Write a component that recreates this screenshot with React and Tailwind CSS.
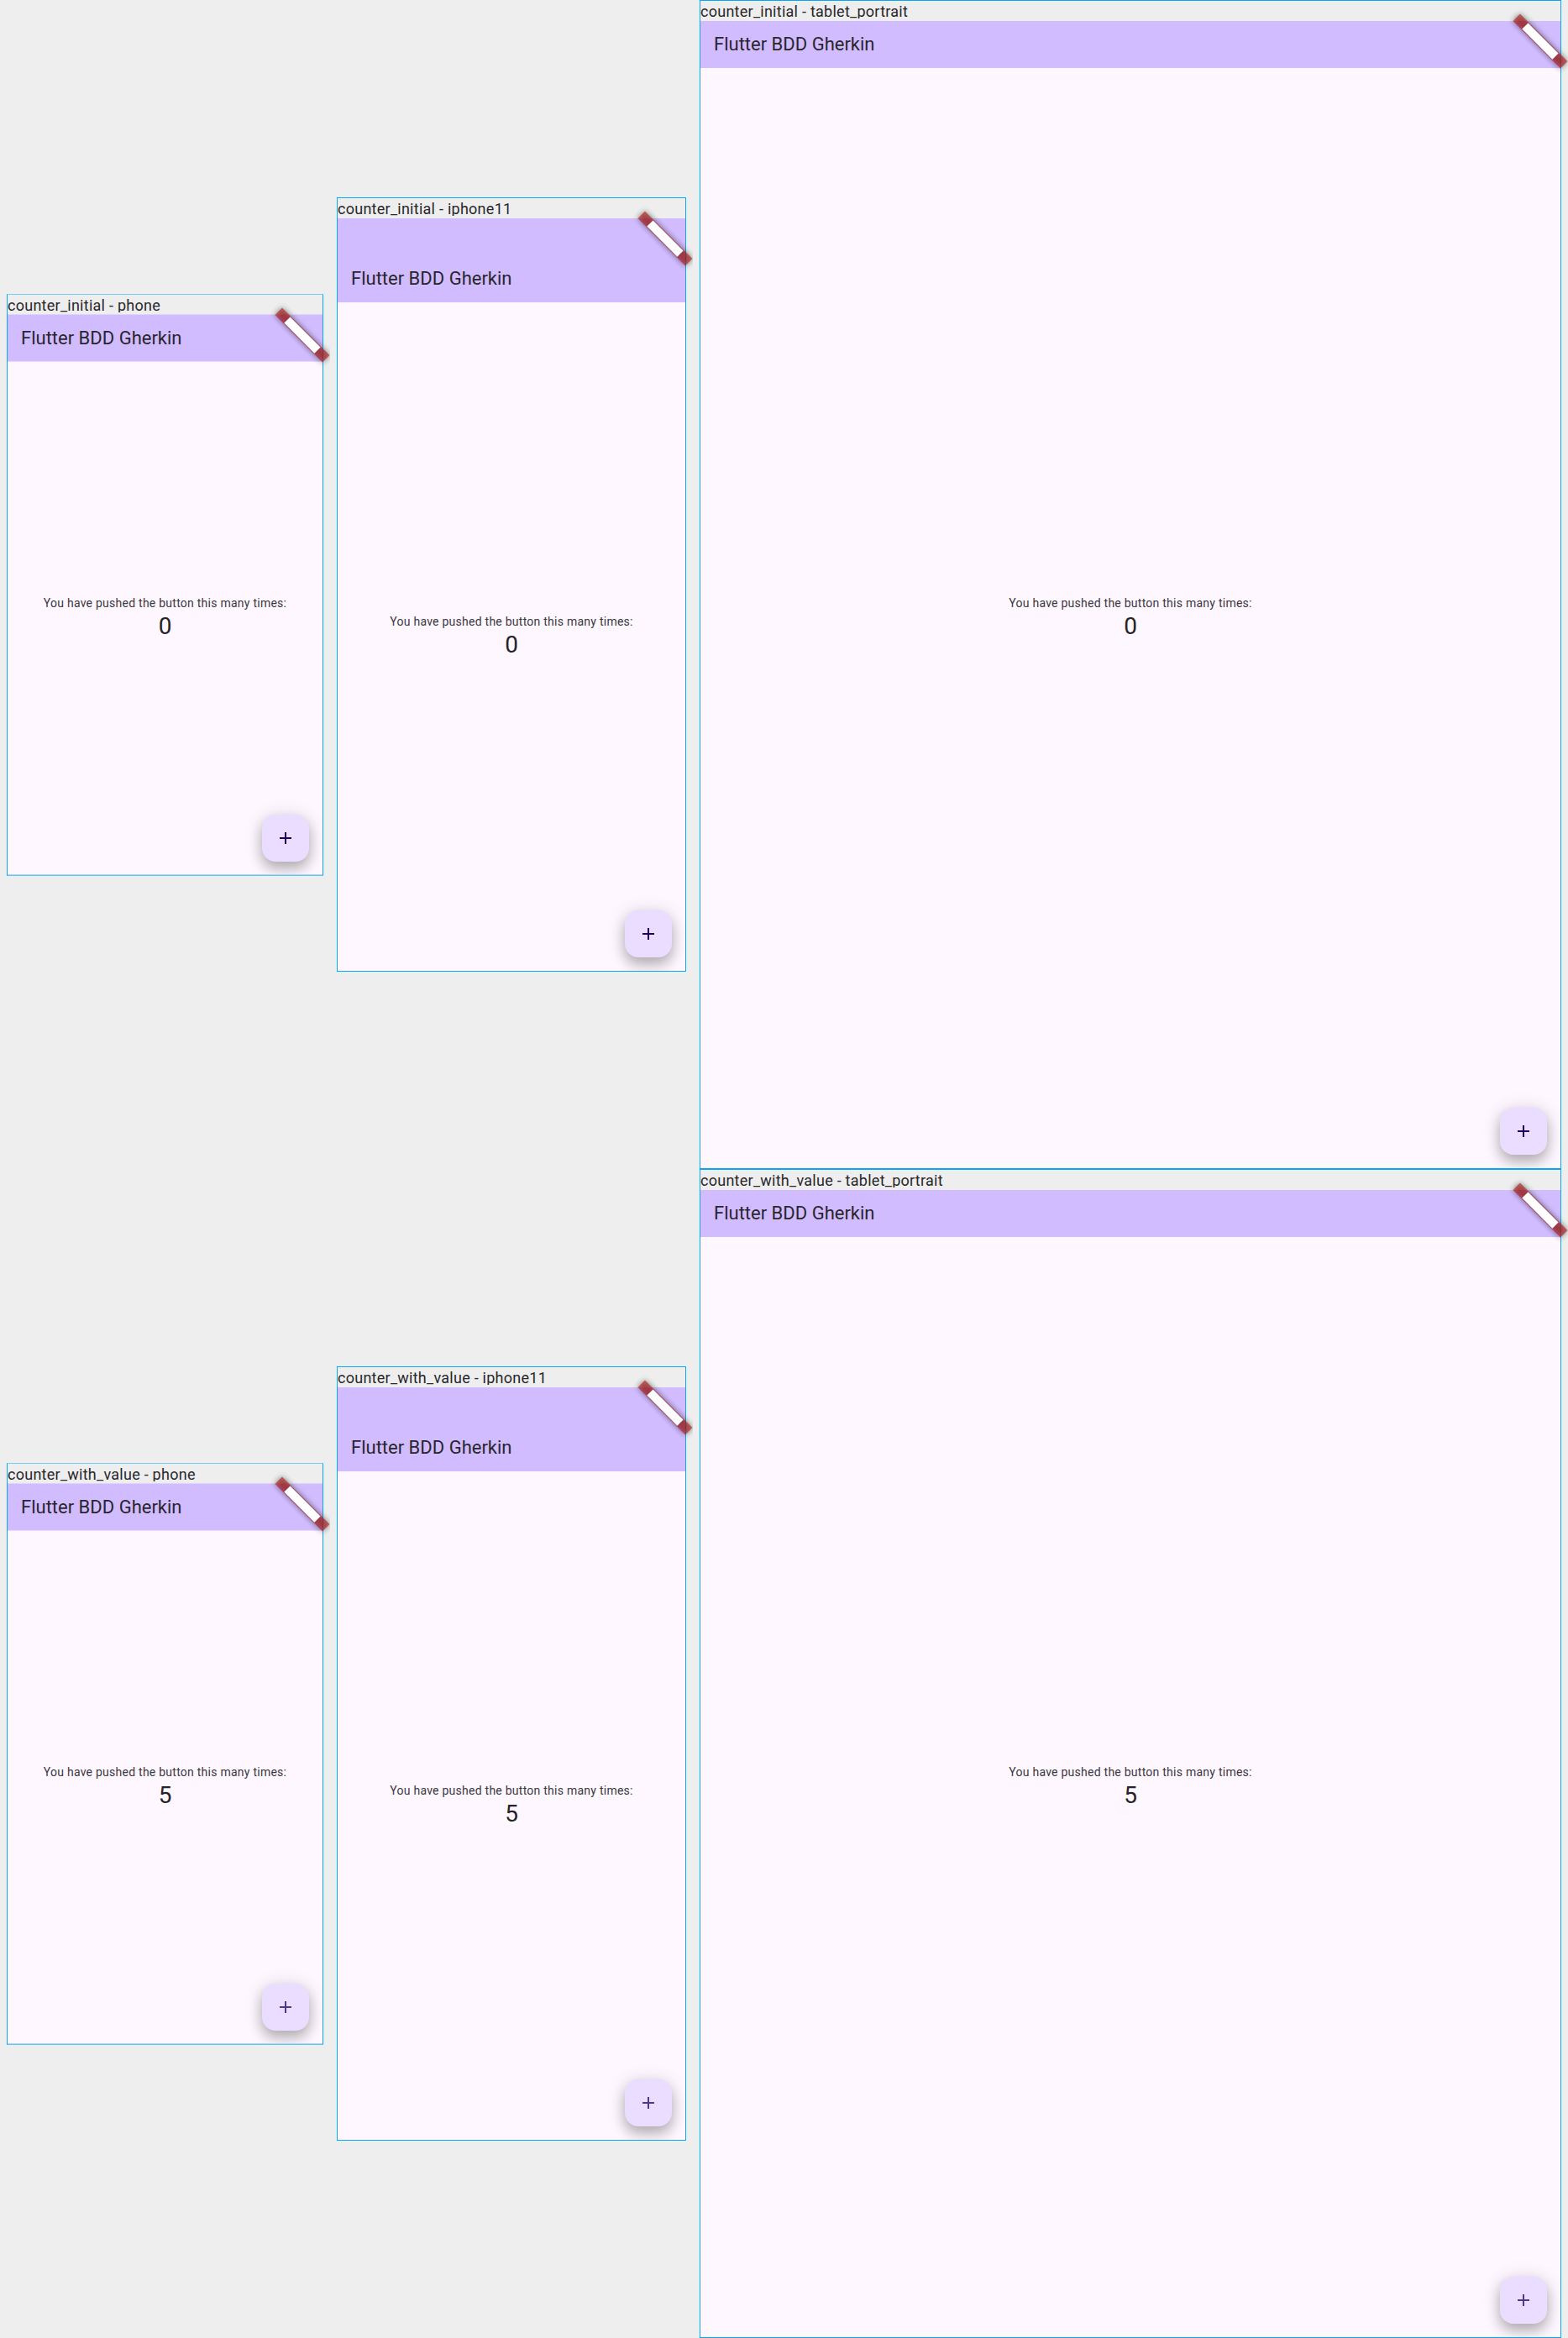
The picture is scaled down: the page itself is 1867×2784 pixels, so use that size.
function Banner() {
  return (
    <svg
      className="pointer-events-none absolute -right-[18px] -top-[18px] h-[84px] w-[84px] overflow-visible"
      viewBox="-66 -18 84 84"
    >
      <g transform="rotate(45)">
        <rect x="-40" y="28" width="80" height="12" fill="#000" fillOpacity="0.5" className="blur-[3.5px]" />
        <rect x="-40" y="28" width="80" height="12" fill="#b71c1c" fillOpacity="0.627" />
        <rect x="-25.5" y="28.9" width="51" height="10.2" fill="#fff" />
      </g>
    </svg>
  );
}

function Fab({ iconColor, position }) {
  return (
    <div className={`absolute right-4 flex h-14 w-14 items-center justify-center rounded-2xl bg-[#eaddff] shadow-[0_9px_15px_0_rgba(0,0,0,0.23),0_2px_22px_0_rgba(0,0,0,0.14)] ${position}`}>
      <svg className="h-6 w-6" viewBox="0 0 24 24" fill={iconColor}>
        <path d="M19 13h-6v6h-2v-6H5v-2h6V5h2v6h6z" />
      </svg>
    </div>
  );
}

function Device({ label, value, iconColor, cell, frame, bar, fab = "bottom-4", labelEdge = "", bodyEdge = "" }) {
  return (
    <div className={`relative flex h-[1392px] flex-col justify-center bg-[#eeeeee] px-2 ${cell}`}>
      <div className={`flex flex-col border border-[#03a9f4] ${frame}`}>
        <div className={`h-6 shrink-0 ${labelEdge}`}>
          <div className="h-[21px] overflow-y-clip whitespace-nowrap pt-px text-[18px] leading-6 tracking-[0.26px] text-[#29272c]">
            {label}
          </div>
        </div>
        <div className={`relative flex min-h-0 flex-1 flex-col ${bodyEdge}`}>
          <div className="relative flex min-h-0 flex-1 flex-col overflow-hidden bg-[#fef7ff]">
            <div className={`flex shrink-0 items-end bg-[#d1bcff] px-4 ${bar}`}>
              <div className="flex h-14 items-center text-[22px] leading-7 text-[#29262e]">Flutter BDD Gherkin</div>
            </div>
            <div className="flex flex-1 flex-col items-center justify-center">
              <p className="whitespace-nowrap text-[14px] leading-5 tracking-[0.25px] text-[#3a383d]">
                You have pushed the button this many times:
              </p>
              <p className="text-[28px] leading-9 text-[#252328]">{value}</p>
            </div>
            <Fab iconColor={iconColor} position={fab} />
          </div>
          <Banner />
        </div>
      </div>
    </div>
  );
}

function Scenario({ name, value, iconColor }) {
  const shared = { value, iconColor };
  return (
    <div className="flex">
      <Device
        {...shared}
        label={`${name} - phone`}
        cell="w-[393px]"
        frame="h-[693px] border-t-[#76cdf5] border-b-[#62c6f2]"
        bar="h-14 shadow-[inset_0_-1px_0_#e7d9ff]"
        fab="bottom-[15px]"
        labelEdge="border-b border-b-[#dfd5f7]"
        bodyEdge="border-b border-b-[#a5daf7]"
      />
      <Device {...shared} label={`${name} - iphone11`} cell="w-[432px]" frame="h-[922px]" bar="h-[100px]" />
      <Device {...shared} label={`${name} - tablet_portrait`} cell="w-[1042px]" frame="h-[1392px]" bar="h-14" />
    </div>
  );
}

export default function App() {
  return (
    <div className="h-[2784px] w-[1867px] overflow-hidden bg-[#eeeeee] font-['Roboto',sans-serif] text-[#1d1b20]">
      <Scenario name="counter_initial" value="0" iconColor="#21005d" />
      <Scenario name="counter_with_value" value="5" iconColor="#4f378a" />
    </div>
  );
}
